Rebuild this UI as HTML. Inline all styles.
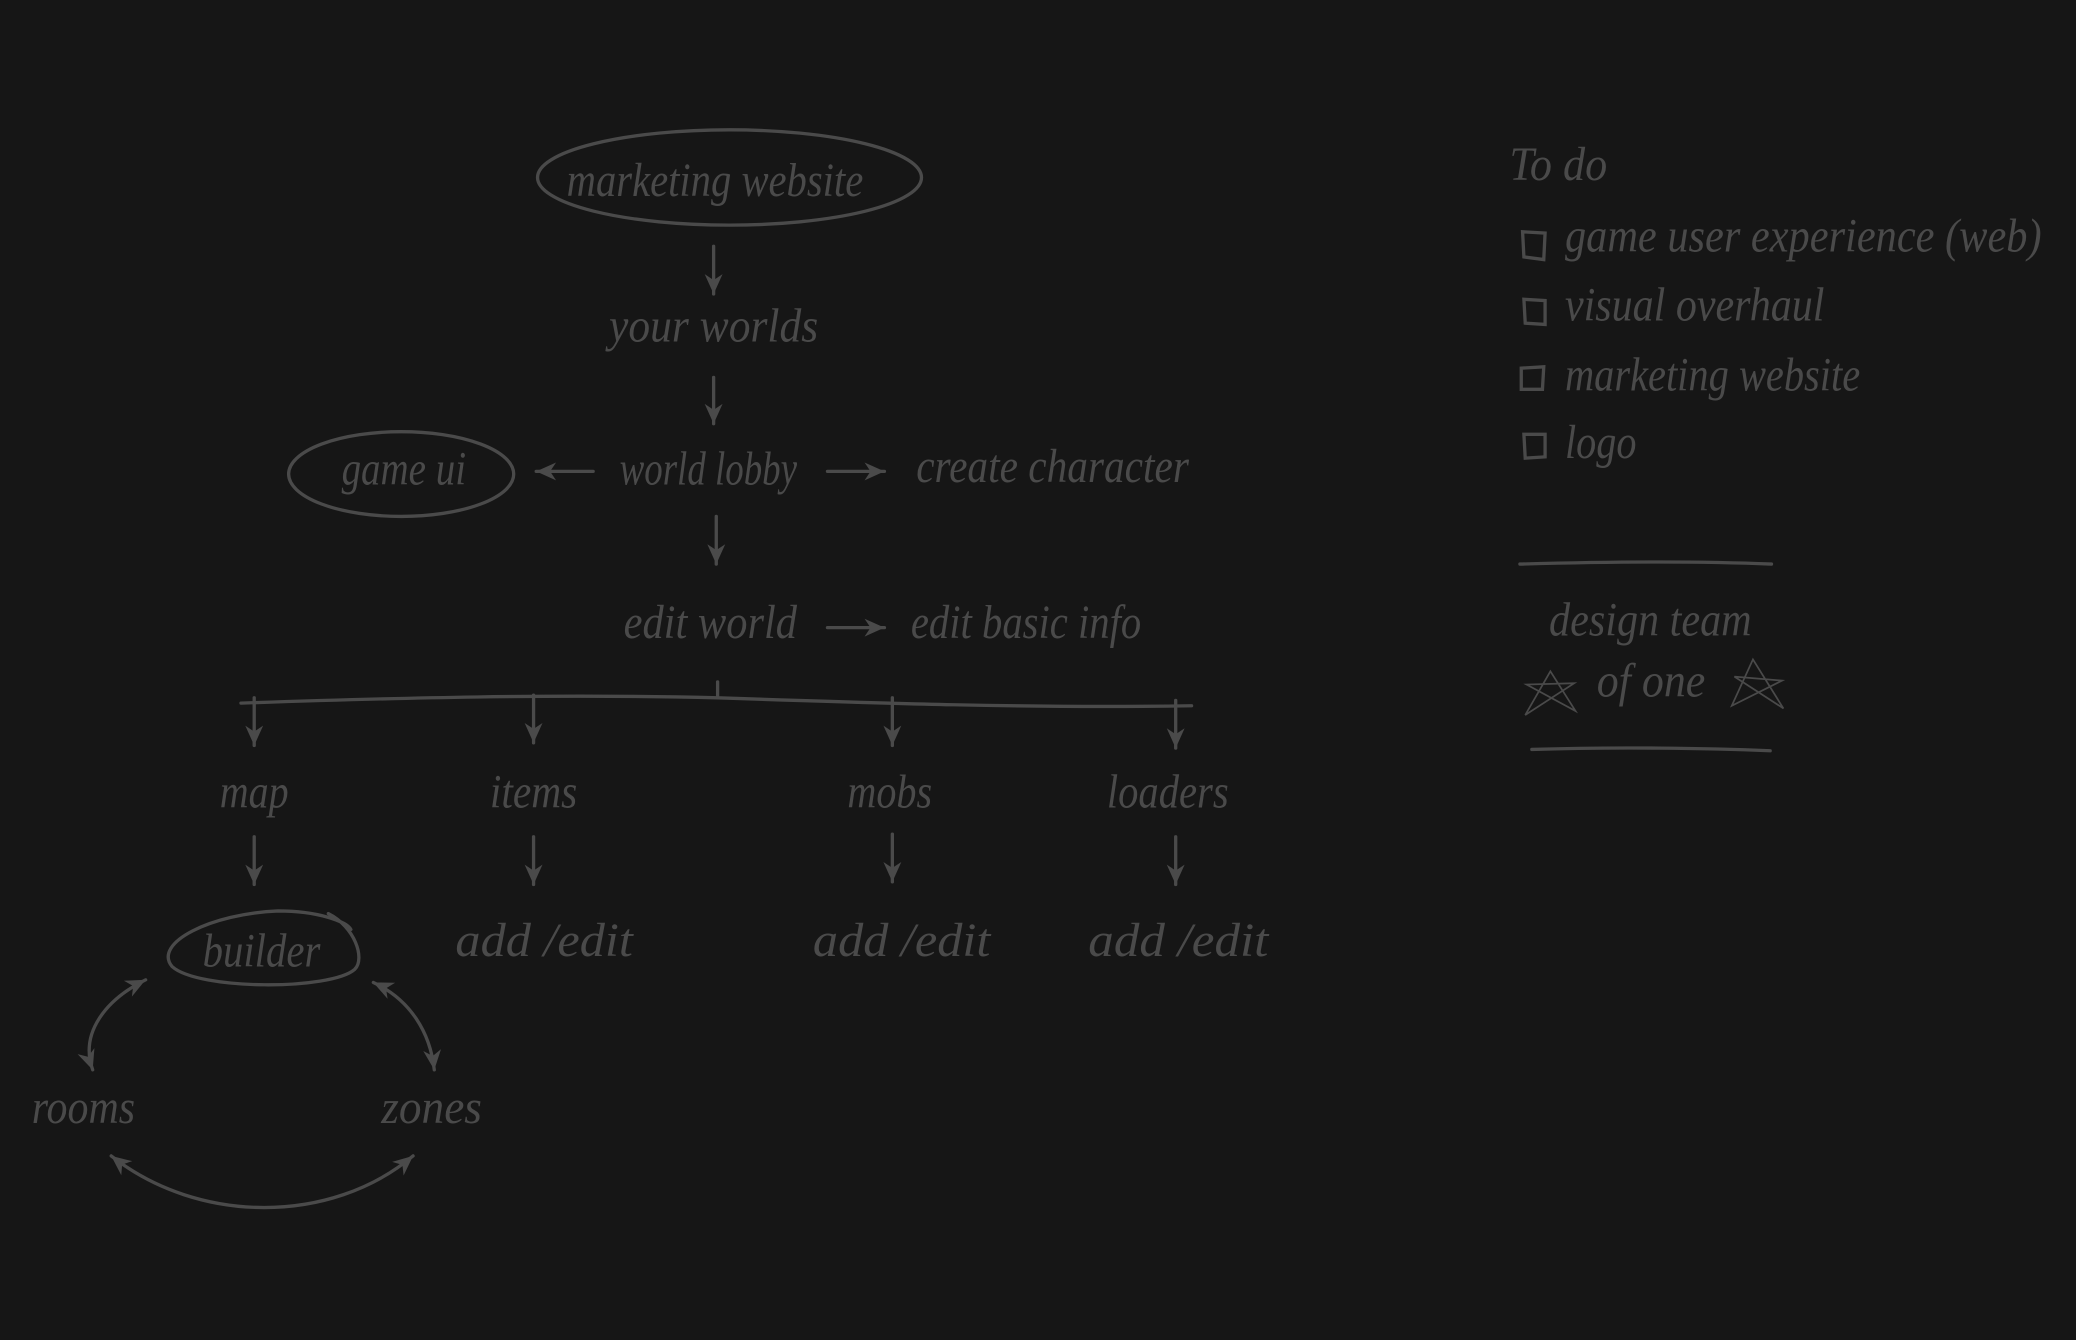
<!DOCTYPE html>
<html><head><meta charset="utf-8"><style>
html,body{margin:0;padding:0;background:#161616;overflow:hidden}
svg{display:block}
text{font-family:"Liberation Serif",serif;font-style:italic;fill:#4a4a4a;font-size:36px}
</style></head><body>
<svg width="2076" height="1340" viewBox="0 0 1568 1012" xmlns="http://www.w3.org/2000/svg">
<defs>
<marker id="a" viewBox="0 0 12 12" refX="11" refY="6" markerWidth="18" markerHeight="18" markerUnits="userSpaceOnUse" orient="auto-start-reverse">
<path d="M1 1.5 L11 6 L1 10.5 L4 6 Z" fill="#4a4a4a"/>
</marker>
</defs>
<rect width="1568" height="1012" fill="#161616"/>
<g stroke="#4a4a4a" stroke-width="2.5" fill="none" stroke-linecap="round">
<ellipse cx="551" cy="134" rx="145" ry="36"/>
<ellipse cx="303" cy="358" rx="85" ry="32"/>
<path d="M248 690 C268 700 276 724 268 732 C250 748 150 748 130 730 C115 712 160 690 210 688 C240 688 262 696 265 702"/>
<path d="M539 186 V222" marker-end="url(#a)"/>
<path d="M539 285 V320" marker-end="url(#a)"/>
<path d="M541 390 V426" marker-end="url(#a)"/>
<path d="M448 356 H405" marker-end="url(#a)"/>
<path d="M625 356 H668" marker-end="url(#a)"/>
<path d="M625 474 H668" marker-end="url(#a)"/>
<path d="M182 531 C300 527 420 524 542 527 C660 531 780 535 900 533"/>
<path d="M542 515 V527"/>
<path d="M192 527 V563" marker-end="url(#a)"/>
<path d="M403 525 V561" marker-end="url(#a)"/>
<path d="M674 527 V563" marker-end="url(#a)"/>
<path d="M888 529 V565" marker-end="url(#a)"/>
<path d="M192 632 V668" marker-end="url(#a)"/>
<path d="M403 632 V668" marker-end="url(#a)"/>
<path d="M674 630 V666" marker-end="url(#a)"/>
<path d="M888 632 V668" marker-end="url(#a)"/>
<path d="M70 808 C60 780 80 755 110 740" marker-start="url(#a)" marker-end="url(#a)"/>
<path d="M282 742 C310 755 325 780 328 808" marker-start="url(#a)" marker-end="url(#a)"/>
<path d="M84 873 C150 925 250 925 312 873" marker-start="url(#a)" marker-end="url(#a)"/>
<path d="M1150 175 L1167 176 L1166 196 L1151 194 Z"/>
<path d="M1151 226 L1167 227 L1167 245 L1152 244 Z"/>
<path d="M1149 278 L1166 277 L1165 294 L1149 294 Z"/>
<path d="M1151 328 L1167 328 L1167 345 L1152 346 Z"/>
<path d="M1148 426 C1220 424 1290 424 1338 426"/>
<path d="M1157 566 C1220 564 1290 565 1337 567"/>
<path d="M1152 540 L1171 507 L1190 537 L1153 517 L1189 516 Z" stroke-width="1.3"/>
<path d="M1308 533 L1324 498 L1347 535 L1310 511 L1346 514 Z" stroke-width="1.3"/>
</g>
<text x="428" y="148" textLength="224" lengthAdjust="spacingAndGlyphs">marketing website</text>
<text x="460" y="258" textLength="158" lengthAdjust="spacingAndGlyphs">your worlds</text>
<text x="258" y="366" textLength="94" lengthAdjust="spacingAndGlyphs">game ui</text>
<text x="468" y="366" textLength="134" lengthAdjust="spacingAndGlyphs">world lobby</text>
<text x="692" y="364" textLength="206" lengthAdjust="spacingAndGlyphs">create character</text>
<text x="471" y="482" textLength="131" lengthAdjust="spacingAndGlyphs">edit world</text>
<text x="688" y="482" textLength="174" lengthAdjust="spacingAndGlyphs">edit basic info</text>
<text x="166" y="610" textLength="52" lengthAdjust="spacingAndGlyphs">map</text>
<text x="370" y="610" textLength="66" lengthAdjust="spacingAndGlyphs">items</text>
<text x="640" y="610" textLength="64" lengthAdjust="spacingAndGlyphs">mobs</text>
<text x="836" y="610" textLength="92" lengthAdjust="spacingAndGlyphs">loaders</text>
<text x="344" y="722" textLength="134" lengthAdjust="spacingAndGlyphs">add /edit</text>
<text x="614" y="722" textLength="134" lengthAdjust="spacingAndGlyphs">add /edit</text>
<text x="822" y="722" textLength="136" lengthAdjust="spacingAndGlyphs">add /edit</text>
<text x="153" y="730" textLength="89" lengthAdjust="spacingAndGlyphs">builder</text>
<text x="24" y="848" textLength="78" lengthAdjust="spacingAndGlyphs">rooms</text>
<text x="288" y="848" textLength="76" lengthAdjust="spacingAndGlyphs">zones</text>
<text x="1140" y="136" textLength="74" lengthAdjust="spacingAndGlyphs">To do</text>
<text x="1182" y="190" textLength="360" lengthAdjust="spacingAndGlyphs">game user experience (web)</text>
<text x="1182" y="242" textLength="196" lengthAdjust="spacingAndGlyphs">visual overhaul</text>
<text x="1182" y="295" textLength="223" lengthAdjust="spacingAndGlyphs">marketing website</text>
<text x="1182" y="346" textLength="54" lengthAdjust="spacingAndGlyphs">logo</text>
<text x="1170" y="480" textLength="153" lengthAdjust="spacingAndGlyphs">design team</text>
<text x="1206" y="526" textLength="82" lengthAdjust="spacingAndGlyphs">of one</text>
</svg>
</body></html>
